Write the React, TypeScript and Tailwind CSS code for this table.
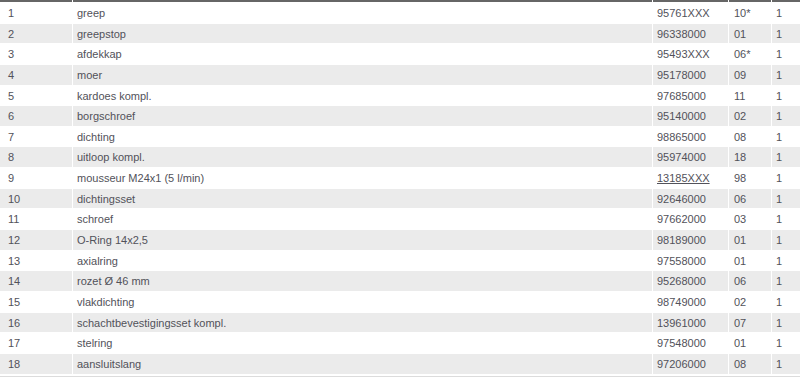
import React from "react";

type Row = [string, string, string, string, string, boolean?];

const rows: Row[] = [
  ["1", "greep", "95761XXX", "10*", "1"],
  ["2", "greepstop", "96338000", "01", "1"],
  ["3", "afdekkap", "95493XXX", "06*", "1"],
  ["4", "moer", "95178000", "09", "1"],
  ["5", "kardoes kompl.", "97685000", "11", "1"],
  ["6", "borgschroef", "95140000", "02", "1"],
  ["7", "dichting", "98865000", "08", "1"],
  ["8", "uitloop kompl.", "95974000", "18", "1"],
  ["9", "mousseur M24x1 (5 l/min)", "13185XXX", "98", "1", true],
  ["10", "dichtingsset", "92646000", "06", "1"],
  ["11", "schroef", "97662000", "03", "1"],
  ["12", "O-Ring 14x2,5", "98189000", "01", "1"],
  ["13", "axialring", "97558000", "01", "1"],
  ["14", "rozet Ø 46 mm", "95268000", "06", "1"],
  ["15", "vlakdichting", "98749000", "02", "1"],
  ["16", "schachtbevestigingsset kompl.", "13961000", "07", "1"],
  ["17", "stelring", "97548000", "01", "1"],
  ["18", "aansluitslang", "97206000", "08", "1"],
];

export default function App() {
  return (
    <div
      className="w-[800px] h-[380px] bg-white overflow-hidden text-[11px] text-[#52525a]"
      style={{ fontFamily: '"Liberation Sans", Arial, sans-serif' }}
    >
      <div className="flex flex-col gap-px">
        <div className="flex gap-px h-[2px]">
          <div className="w-[72px] bg-[#666]" />
          <div className="w-[579px] bg-[#666]" />
          <div className="w-[75px] bg-[#666]" />
          <div className="w-[42px] bg-[#666]" />
          <div className="w-[28px] bg-[#666]" />
        </div>
        {rows.map((r, i) => {
          const bg = i % 2 === 0 ? "bg-white" : "bg-[#ebebeb]";
          return (
            <div key={i} className="flex gap-px h-[19.65px] leading-[19.65px]">
              <div className={`w-[72px] pl-[8px] pt-[1px] ${bg}`}>{r[0]}</div>
              <div className={`w-[579px] pl-[4px] pt-[1px] ${bg}`}>{r[1]}</div>
              <div className={`w-[75px] pl-[4px] pt-[1px] ${bg}`}>
                {r[5] ? <span className="underline">{r[2]}</span> : r[2]}
              </div>
              <div className={`w-[42px] pl-[5px] pt-[1px] ${bg}`}>{r[3]}</div>
              <div className={`w-[28px] pl-[4px] pt-[1px] ${bg}`}>{r[4]}</div>
            </div>
          );
        })}
      </div>
      <div className="mt-[2px] h-[1px] bg-[#dcdcdc]" />
    </div>
  );
}
